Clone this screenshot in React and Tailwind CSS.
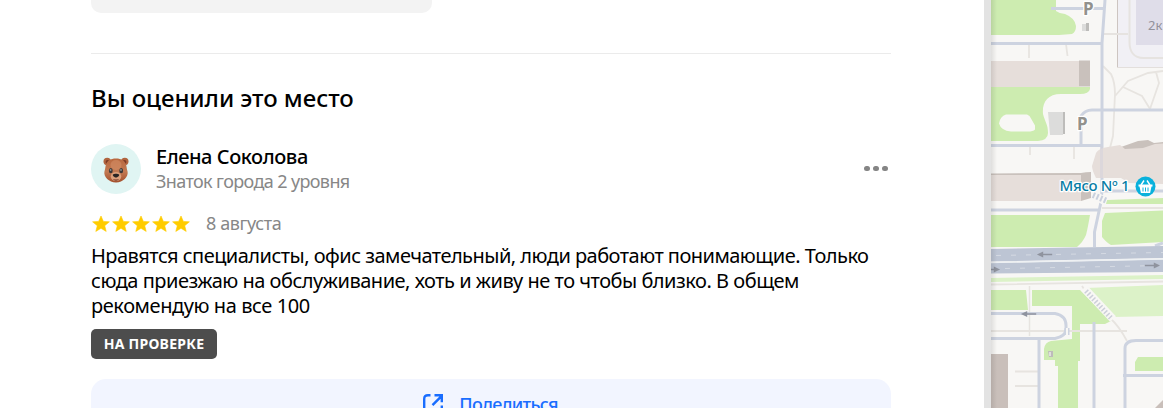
const BearAvatar = () => {
  return (
    <div className="flex size-[50px] shrink-0 items-center justify-center rounded-full bg-[#e0f5f3]">
      <svg viewBox="0 0 26 26" className="mt-0.5 size-[26px]">
        <defs>
          <linearGradient id="fur" x1="0" y1="0" x2="0" y2="1">
            <stop offset="0" stopColor="#b9683f" />
            <stop offset="0.55" stopColor="#c27a52" />
            <stop offset="1" stopColor="#a34f2c" />
          </linearGradient>
        </defs>
        <circle cx="4.2" cy="4.4" r="3.7" fill="#b0643f" />
        <circle cx="21.8" cy="4.4" r="3.7" fill="#b0643f" />
        <circle cx="4.6" cy="4.9" r="2" fill="#7c3a25" />
        <circle cx="21.4" cy="4.9" r="2" fill="#7c3a25" />
        <path d="M13 1.5c5.500 0 9.300 2.400 10.300 7 .4 2 .6 3.700 1.300 6.300.9 4.900-4.400 10.700-11.600 10.700S.5 19.700 1.400 14.800C2.100 12.200 2.300 10.500 2.700 8.500 3.700 3.900 7.500 1.500 13 1.500z" fill="url(#fur)" />
        <ellipse cx="13" cy="8" rx="5.500" ry="5" fill="#d38d66" opacity="0.6" />
        <ellipse cx="13" cy="19.500" rx="5.300" ry="4.600" fill="#dba07b" />
        <ellipse cx="7.800" cy="13.700" rx="1.900" ry="2.600" fill="#3b3838" />
        <ellipse cx="18.200" cy="13.700" rx="1.900" ry="2.600" fill="#3b3838" />
        <circle cx="7.600" cy="13" r="0.900" fill="#8d8d8b" />
        <circle cx="18" cy="13" r="0.900" fill="#8d8d8b" />
        <path d="M9.900 17.500c1-1 5.200-1 6.200 0 .6 1.200-1.500 3-3.100 3s-3.700-1.800-3.100-3z" fill="#292524" />
        <path d="M10.200 22c1.800.8 3.800.8 5.600 0-.6 2.200-5 2.200-5.600 0z" fill="#6e3024" />
      </svg>
    </div>
  );
};

const Star = () => {
  return (
    <svg viewBox="0 0 20 20" className="size-5" fill="#ffcc00" stroke="#ffcc00" strokeWidth="0.6" strokeLinejoin="round">
      <path d="M10 2l2.350 5.400 6.050.45-4.700 3.850 1.500 5.700L10 14.300l-5.200 3.100 1.500-5.700L1.600 7.850l6.050-.45z" />
    </svg>
  );
};

const DirectionArrow = ({ x, y, flip }) => {
  return (
    <path
      d="M-8-.8H2V-3.200L9 0 2 3.200V.8H-8z"
      fill="#8f939e"
      transform={`translate(${x} ${y}) scale(${flip ? -0.9 : 0.9} 0.9)`}
    />
  );
};

const CityMap = () => {
  return (
    <svg viewBox="991 0 172 408" className="block h-[408px] w-[172px]">
      <rect x="991" width="172" height="408" fill="#f8f7f5" />

      {/* greenery */}
      <g fill="#cdecb0">
        <path d="M991 0h65v11q4 3 9 3 10 4 11 12 0 6-4 8l-13 1h-68z" />
        <path d="M991 87h99v2q-1 5-10 5h-19c-14 0-19 9-18 20 2 8 5 10 5 19q0 7-10 8h-47z" />
        <path d="M991 215h99q-2 12-4 20-3 7-9 12h-86z" />
        <path d="M1105 213l58-2.500V242l-52 3q-4-2-9-8v-16z" />
        <path d="M1107 200l56-2v6h-57z" />
        <path d="M991 290h35l2 20h-37zM1032 290h48l31 31-6 3h-25v37h-2v47h-20v-42h-3v-6h-11v-11q1-7 7-8l21-2v-33h-40z" />
        <path d="M1135 371v-9l3-5h25v14z" />
      </g>
      <g fill="#dcf2c8">
        <path d="M991 278l172-3v4l-172 3z" />
        <path d="M1086 288l77-3v31l-50 1z" />
      </g>
      <path d="M1006 114.500h21q3 1 4 4l4 7v4q-2 2-7 2h-17q-10-1-12-8 1-7 7-9z" fill="#f8f7f5" />

      {/* footpaths */}
      <g fill="none" stroke="#e7e4e0" strokeWidth="1.8">
        <path d="M1029 44v14M1066 44l1.500 12M1030 146v9M1074 146v13" />
        <path d="M1103 66l8 8q4 8 4 20l-2 42-4 16M1115 96l13-15 20-8 15-2M1123 87l19 9 8 13 9-26-3-11" />
        <path d="M991 284.500l172-3M991 331h136M1015 371.500h24M1015 386h24M1102 208h61M1082 286l4 6M1110 318q9 8 17 23" />
      </g>
      <path d="M1029.500 286v50" stroke="#e7e4e0" strokeWidth="1.5" />

      {/* school quarter */}
      <path d="M1117 0h46v67h-46z" fill="#f1f0f5" />
      <path d="M1117.500 0v67.500" stroke="#cdc5c1" />
      <path d="M1117 67.500h46" stroke="#e3dfdc" />
      <path d="M1103 34h25M1129.500 0v42c0 9 4 16 14 16h20" fill="none" stroke="#e6e3e0" strokeWidth="2" />
      <path d="M1136 0h27v45h-27z" fill="#dfdde9" />

      {/* roads */}
      <g fill="none" stroke="#cdd3e0" strokeWidth="3" strokeLinejoin="round">
        <path d="M1051 8.500h53M991 43.500h110M1105 0l-3 43v147l-1 12-6.500 30v15M1163 110h-71q-7 0-11 6v29M991 145.500h110M991 210h109M1103 191h60" />
        <path d="M991 313.500h64q11 2 11 12v3q0 8-11 10h-64M1039 338v70M1094 322v86M1163 340.500h-27q-11 0-11 8v59.500M1123 375.500h40M1155 246l8-3" />
      </g>

      {/* houses */}
      <path d="M991 61h88v26h-88z" fill="#e6deda" />
      <path d="M1079 60.500h11v26h-11z" fill="#c9c1bc" />
      <path d="M1048 112h15v23h-13z" fill="#dcdcdb" />
      <path d="M1063 112h2v22h-2z" fill="#bdbcba" />
      <path d="M1082 24h5v7h-5z" fill="#dcdcdb" />
      <path d="M1086 23h3v8h-3z" fill="#bdbcba" />
      <path d="M991 175h90v26h-90z" fill="#e6deda" />
      <path d="M991 173.500l90-.5v2h-90zM1081 173q5-1 10-1v26l-10 3z" fill="#c9c1bc" />
      <path d="M1121 147l17-6 10-1 6 3 9-1v12h-40z" fill="#c9c1bc" />
      <path d="M1096 153q3-5 12-6l12-2 5 4 18-1 12-4 8-.5V184l-34-1-8-5h-25q-4-8-4-12z" fill="#e6deda" />
      <path d="M1101.500 146v32" stroke="#d3d2dc" strokeWidth="3" opacity="0.5" />
      <path d="M991 354h17v54h-17zM1155 408l8-8v8z" fill="#c9bfba" />
      <path d="M1048 351h5v6h-4z" fill="#bdbcba" />
      <path d="M1049 352h2v4h-2z" fill="#e0dfdd" />

      {/* crossings */}
      <path d="M1093 194l13 8" stroke="#f8f7f5" strokeWidth="8" />
      <path d="M1093 195l14 6" stroke="#c9d0dd" strokeWidth="6" strokeDasharray="2 2" />
      <path d="M1084 288l29 31" stroke="#f8f7f5" strokeWidth="8" />
      <path d="M1086 291l25 27" stroke="#cccfd9" strokeWidth="5" strokeDasharray="1.500 2" />
      <path d="M1067 328v7" stroke="#cdd3e0" strokeWidth="5" />
      <path d="M1067 328v7" stroke="#f8f7f5" strokeWidth="2" />

      {/* avenue */}
      <path d="M991 249l172-3v12l-172 3.500zM991 263l172-3.500v12.500l-172 1.500z" fill="#bdc5d4" />
      <path d="M996 255.500l167-3M1005 268.500l158-3" stroke="#d5dae3" strokeDasharray="5 10" />
      <path d="M991 262.500l172-3.500" stroke="#edf0f3" strokeWidth="1.3" />
      <DirectionArrow x={1045} y={254.5} flip />
      <DirectionArrow x={1152} y={265.5} />
      <DirectionArrow x={992} y={269.5} />
      <DirectionArrow x={1029} y={314} flip />

      <g fontFamily='"Noto Sans", sans-serif' stroke="#ffffff" strokeWidth="2.5" paintOrder="stroke" strokeLinejoin="round">
        <text x="1083" y="14.5" fontSize="17" fontWeight="700" fill="#92918d">P</text>
        <text x="1077" y="130" fontSize="17" fontWeight="700" fill="#92918d">P</text>
        <text x="1148" y="30" fontSize="13" fill="#92919b" strokeWidth="0">2к</text>
        <text x="1059.500" y="190.500" fontSize="15" fontWeight="500" fill="#087da5" textLength="70">Мясо Nº 1</text>
      </g>

      <circle cx="1145.500" cy="186.500" r="10" fill="#09b1dc" />
      <path d="M1138.500 184.500h14v2h-1l-1.400 6.500h-9.200l-1.400-6.500h-1z" fill="#ffffff" />
      <path d="M1141 185l3-4.500M1150 185l-3-4.500" stroke="#ffffff" strokeWidth="1.4" />
      <path d="M1143 187.500v4M1145.500 187.500v4M1148 187.500v4" stroke="#09b1dc" />
    </svg>
  );
};

const ShareIcon = () => {
  return (
    <svg viewBox="0 0 24 24" className="size-6 shrink-0" fill="none" stroke="#196dff" strokeWidth="2.4">
      <path d="M9.500 3.200H7Q3.200 3.200 3.200 7v10q0 3.800 3.800 3.800h10q3.800 0 3.800-3.800v-3.500" />
      <path d="M13.500 3.200h7.300v7M21 3.700l-9.500 9.500" />
    </svg>
  );
};

export default function App() {
  return (
    <div className="flex h-[408px] w-[1163px] overflow-hidden bg-white font-['Noto_Sans',sans-serif] text-black">
      <main className="flex w-[984px] shrink-0 flex-col pl-[91px]">
        <div className="h-[13px] w-[341px] shrink-0 rounded-b-[10px] bg-[#f3f3f3]" />
        <div className="mt-10 h-px w-[800px] shrink-0 bg-[#ebebeb]" />

        <h2 className="mt-7 h-8 text-2xl leading-8 font-medium tracking-[-0.05px] whitespace-nowrap">
          <span>Вы оценили это место</span>
        </h2>

        <div className="mt-[30px] flex h-[50px] w-[800px] items-center">
          <BearAvatar />
          <div className="ml-[15px] flex-1 whitespace-nowrap">
            <div className="h-[25px] text-xl leading-[25px] font-medium tracking-[-0.43px]">
              <span>Елена Соколова</span>
            </div>
            <div className="h-[25px] text-lg leading-[25px] tracking-[-0.62px] text-[#878787]">
              <span>Знаток города 2 уровня</span>
            </div>
          </div>
          <div className="mr-[3.5px] mb-px flex gap-[3.5px]">
            <i className="size-[5.5px] rounded-full bg-[#858585]" />
            <i className="size-[5.5px] rounded-full bg-[#858585]" />
            <i className="size-[5.5px] rounded-full bg-[#858585]" />
          </div>
        </div>

        <div className="mt-[17px] flex h-[25px] items-center">
          <div className="flex">
            {[...Array(5)].map((_, i) => (
              <Star key={i} />
            ))}
          </div>
          <span className="ml-[15px] text-lg leading-[25px] tracking-[-0.4px] text-[#878787]">8 августа</span>
        </div>

        <p className="mt-[7px] text-xl leading-[25px] whitespace-nowrap">
          <span className="block w-fit tracking-[-0.525px]">Нравятся специалисты, офис замечательный, люди работают понимающие. Только</span>
          <span className="block w-fit tracking-[-0.485px]">сюда приезжаю на обслуживание, хоть и живу не то чтобы близко. В общем</span>
          <span className="block w-fit tracking-[-0.42px]">рекомендую на все 100</span>
        </p>

        <div className="mt-[11px] flex h-[30px] w-[126px] shrink-0 items-center justify-center rounded-[5px] bg-[#4d4d4d] text-sm font-bold tracking-[0.25px] whitespace-nowrap text-white">
          <span>НА ПРОВЕРКЕ</span>
        </div>

        <button className="mt-5 flex h-[50px] w-[800px] shrink-0 items-center justify-center gap-3.5 rounded-[15px] bg-[#f2f5ff] pr-[3px] text-lg font-medium tracking-[-0.7px] text-[#196dff]">
          <ShareIcon />
          <span>Поделиться</span>
        </button>
      </main>
      <div className="w-[7px] shrink-0 bg-[#e3e3e3]" />
      <div className="relative w-[172px] shrink-0">
        <CityMap />
        <div className="absolute inset-y-0 left-0 w-1.5 bg-linear-to-r from-black/10 to-transparent" />
      </div>
    </div>
  );
}
